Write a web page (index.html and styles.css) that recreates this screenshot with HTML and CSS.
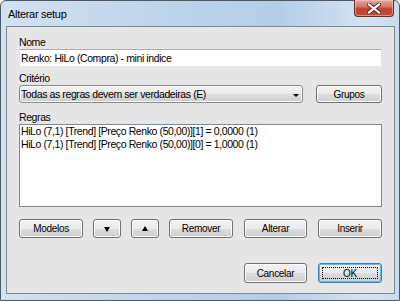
FILE: index.html
```html
<!DOCTYPE html>
<html lang="pt">
<head>
	<meta charset="UTF-8">
	<title>Alterar setup</title>
	<link rel="stylesheet" href="styles.css">
</head>
<body>
	<section class="window">
		<header class="titlebar">
			<span class="title">Alterar setup</span>
			<a href="javascript:;" class="close">
				<svg width="14" height="11" viewBox="0 0 14 11">
					<path d="M2 1.5 L12 9.5 M12 1.5 L2 9.5" stroke="#4a2a26" stroke-width="4" stroke-linecap="square"/>
					<path d="M2 1.5 L12 9.5 M12 1.5 L2 9.5" stroke="#ffffff" stroke-width="2.2" stroke-linecap="square"/>
				</svg>
			</a>
		</header>
		<div class="client">
			<div class="label">Nome</div>
			<div class="input">Renko: HiLo (Compra) - mini indice</div>

			<div class="label spaced">Critério</div>
			<div class="row">
				<div class="combo">
					<span>Todas as regras devem ser verdadeiras (E)</span>
					<i class="caret"></i>
				</div>
				<a href="javascript:;" class="btn grupos">Grupos</a>
			</div>

			<div class="label regras">Regras</div>
			<ul class="list">
				<li>HiLo (7,1) [Trend] [Preço Renko (50,00)][1] = 0,0000 (1)</li>
				<li>HiLo (7,1) [Trend] [Preço Renko (50,00)][0] = 1,0000 (1)</li>
			</ul>

			<nav class="actions">
				<a href="javascript:;" class="btn w64">Modelos</a>
				<a href="javascript:;" class="btn arrow"><i class="tri down"></i></a>
				<a href="javascript:;" class="btn arrow"><i class="tri up"></i></a>
				<a href="javascript:;" class="btn w64">Remover</a>
				<a href="javascript:;" class="btn w63 wide">Alterar</a>
				<a href="javascript:;" class="btn w64 wide">Inserir</a>
			</nav>

			<footer class="footer">
				<a href="javascript:;" class="btn w63">Cancelar</a>
				<a href="javascript:;" class="btn w64 ok"><span>OK</span></a>
			</footer>
		</div>
	</section>
</body>
</html>
```

FILE: styles.css
```css
body{
	margin: 0;
	background: #fff;
	font-family: "Liberation Sans", Arial, sans-serif;
	font-size: 10.5px;
	letter-spacing: -0.4px;
	color: #000;
}
.window{
	width: 400px;
	height: 301px;
	box-sizing: border-box;
	border: 1px solid #4d5866;
	border-radius: 6px 6px 0 0;
	padding: 0 4px 6px 5px;
	background: linear-gradient(90deg, #d3e1f0 0%, #bcd3ea 45%, #b4cde7 70%, #d4e3f2 92%, #c9dbee 100%);
	display: flex;
	flex-direction: column;
}
.titlebar{
	height: 25px;
	position: relative;
	display: flex;
	align-items: center;
}
.title{
	font-size: 11px;
	letter-spacing: -0.3px;
	padding-left: 2px;
	margin-top: 1px;
	color: #000;
}
.close{
	position: absolute;
	top: -1px;
	right: 1px;
	width: 38px;
	height: 16px;
	border: 1px solid #6b2a22;
	border-top: none;
	border-radius: 0 0 4px 4px;
	background: linear-gradient(#e3a99f 0%, #d5786a 40%, #c2412f 55%, #c54a36 100%);
	box-shadow: inset 0 0 0 1px rgba(255,210,200,0.5);
	display: flex;
	align-items: center;
	justify-content: center;
}
.client{
	flex: 1;
	border: 1px solid #7a8897;
	background: #e6e6e6;
	padding: 9px 12px 10px 12px;
	display: flex;
	flex-direction: column;
}
.label{
	height: 13px;
	line-height: 13px;
}
.label.spaced{
	margin-top: 5px;
}
.label.regras{
	margin-top: 8px;
}
.input{
	height: 18px;
	line-height: 16px;
	box-sizing: border-box;
	border: 1px solid #abadb3;
	border-color: #abadb3 #dbdfe6 #e3e9ef #e2e3ea;
	background: #fff;
	padding-left: 1px;
	white-space: nowrap;
}
.row{
	display: flex;
	gap: 13px;
	height: 18px;
}
.combo{
	width: 284px;
	height: 18px;
	box-sizing: border-box;
	border: 1px solid #8a8a8a;
	border-radius: 3px;
	background: linear-gradient(#f2f2f2 0%, #ebebeb 50%, #dddddd 51%, #cfcfcf 100%);
	box-shadow: inset 0 0 0 1px #fbfbfb;
	display: flex;
	align-items: center;
	justify-content: space-between;
	padding: 0 3px 0 1px;
	line-height: 16px;
}
.caret{
	width: 0;
	height: 0;
	border-left: 3px solid transparent;
	border-right: 3px solid transparent;
	border-top: 3px solid #000;
	margin-top: 2px;
}
.btn{
	height: 19px;
	box-sizing: border-box;
	border: 1px solid #707070;
	border-radius: 3px;
	background: linear-gradient(#f2f2f2 0%, #ebebeb 50%, #dddddd 51%, #cfcfcf 100%);
	box-shadow: inset 0 0 0 1px #fcfcfc;
	color: #000;
	text-decoration: none;
	display: flex;
	align-items: center;
	justify-content: center;
	font-size: 10px;
	letter-spacing: -0.3px;
}
.grupos{
	width: 66px;
	height: 18px;
}
.list{
	height: 83px;
	box-sizing: border-box;
	margin: 0;
	padding: 0 0 0 1px;
	list-style: none;
	border: 1px solid #828790;
	background: #fff;
}
.list li{
	height: 13px;
	line-height: 13px;
	white-space: nowrap;
}
.actions{
	margin-top: 12px;
	display: flex;
	gap: 10px;
}
.w64{
	width: 64px;
}
.w63{
	width: 63px;
}
.actions .wide{
	margin-left: 1px;
}
.arrow{
	width: 28px;
}
.tri{
	width: 0;
	height: 0;
	border-left: 3.5px solid transparent;
	border-right: 3.5px solid transparent;
}
.tri.down{
	border-top: 5px solid #000;
	margin-top: 1px;
}
.tri.up{
	border-bottom: 5px solid #000;
}
.footer{
	margin-top: 25px;
	display: flex;
	justify-content: flex-end;
	gap: 11px;
}
.footer .btn{
	height: 20px;
}
.ok{
	border-color: #3c7fb1;
	box-shadow: inset 0 0 0 1px #4fc3f7;
	padding: 3px;
}
.ok span{
	flex: 1;
	align-self: stretch;
	display: flex;
	align-items: center;
	justify-content: center;
	border: 1px dotted #000;
}
```
